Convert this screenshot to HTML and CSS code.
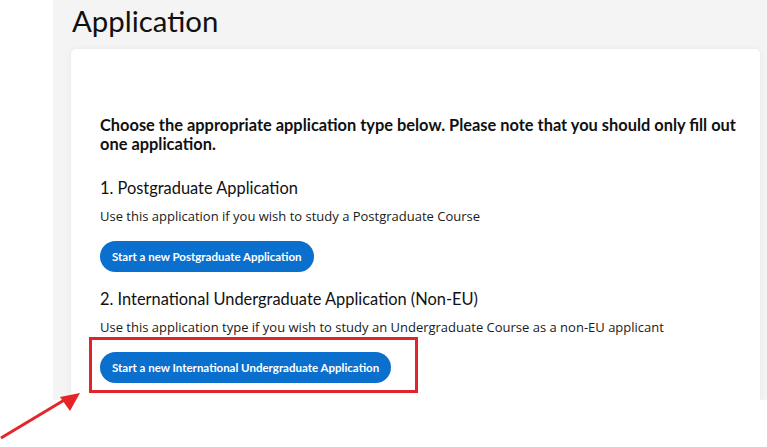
FILE: index.html
```html
<!DOCTYPE html>
<html>
<head>
<meta charset="utf-8">
<link rel="stylesheet" href="styles.css">
</head>
<body>
<div class="layout">
  <div class="side"></div>
  <main class="main">
    <h1 class="title">Application</h1>
    <section class="card">
      <p class="intro">Choose the appropriate application type below. Please note that you should only fill out one application.</p>
      <div class="option">
        <h2 class="opt-title">1. Postgraduate Application</h2>
        <p class="opt-desc">Use this application if you wish to study a Postgraduate Course</p>
        <button class="btn">Start a new Postgraduate Application</button>
      </div>
      <div class="option">
        <h2 class="opt-title">2. International Undergraduate Application (Non-EU)</h2>
        <p class="opt-desc">Use this application type if you wish to study an Undergraduate Course as a non-EU applicant</p>
        <button class="btn">Start a new International Undergraduate Application</button>
      </div>
    </section>
  </main>
</div>
<div class="highlight"></div>
<svg class="arrow" width="90" height="60" viewBox="0 0 90 60">
  <line x1="1" y1="57" x2="66" y2="18" stroke="#e3262a" stroke-width="3"/>
  <polygon points="80,12 60,16 70,30" fill="#e3262a"/>
</svg>
</body>
</html>
```
FILE: styles.css
```css
html, body {
  margin: 0;
  padding: 0;
  background: #ffffff;
}
body {
  width: 767px;
  height: 447px;
  overflow: hidden;
  position: relative;
  font-family: "Open Sans", sans-serif;
  color: #1a1a1a;
}
.layout {
  display: flex;
  height: 400px;
}
.side {
  width: 53px;
  background: #ffffff;
}
.main {
  flex: 1;
  background: #f4f4f4;
  padding: 0 7px 0 18px;
  display: flex;
  flex-direction: column;
  overflow: hidden;
}
.title {
  margin: 0;
  padding: 3px 0 0 1px;
  height: 46px;
  box-sizing: border-box;
  font-family: Lato, sans-serif;
  font-weight: 400;
  font-size: 29.4px;
  line-height: 36px;
  color: #111;
}
.card {
  flex: 1;
  background: #ffffff;
  border-radius: 5px 5px 0 0;
  box-shadow: 0 0 6px rgba(0,0,0,0.06);
  padding: 66px 20px 0 29px;
  margin-top: 3px;
}
.intro {
  margin: 0 0 24px;
  font-family: Lato, sans-serif;
  font-weight: 700;
  font-size: 16.4px;
  line-height: 19px;
  color: #111;
}
.option {
  display: flex;
  flex-direction: column;
  align-items: flex-start;
}
.opt-title {
  margin: 0 0 8px;
  font-family: Lato, sans-serif;
  font-weight: 400;
  font-size: 16.4px;
  line-height: 22px;
  color: #111;
}
.opt-desc {
  margin: 0 0 16px;
  font-size: 13px;
  line-height: 18px;
  color: #1a1a1a;
}
.btn {
  border: 0;
  background: #0a6fcd;
  color: #ffffff;
  border-radius: 16px;
  height: 31px;
  padding: 0 12px;
  font-family: Lato, sans-serif;
  font-weight: 700;
  font-size: 11.5px;
  margin-bottom: 16px;
}
.highlight {
  position: absolute;
  left: 89px;
  top: 337px;
  width: 323px;
  height: 50px;
  border: 3px solid #e0242b;
}
.arrow {
  position: absolute;
  left: 0;
  top: 381px;
}
```
